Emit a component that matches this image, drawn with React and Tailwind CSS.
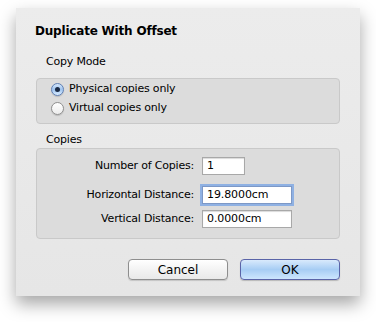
import React from "react";

const font = { fontFamily: '"DejaVu Sans", "Lucida Grande", sans-serif' };

const Radio = ({ checked, label }) => (
  <label className="flex items-center gap-[5px] h-[19px] text-[11px] tracking-[-0.2px] text-black">
    <span
      className={`relative w-[13px] h-[13px] rounded-full border ${
        checked
          ? "border-[#5f7fb3] bg-gradient-to-b from-[#d4e6fa] via-[#9fc4ef] to-[#d9ecff]"
          : "border-[#8f8f8f] bg-gradient-to-b from-[#ffffff] to-[#ececec]"
      } shadow-[0_1px_1px_rgba(0,0,0,0.15)]`}
    >
      {checked && (
        <span className="absolute left-1/2 top-1/2 w-[5px] h-[5px] -ml-[2.5px] -mt-[2.5px] rounded-full bg-[#1a2a44]" />
      )}
    </span>
    {label}
  </label>
);

const Field = ({ label, value, width, focused, className }) => (
  <div className={`flex items-center h-[18px] ${className}`}>
    <span className="w-[165px] text-right pr-[8px] text-[11px] tracking-[-0.2px] text-black">{label}</span>
    <div
      className={`h-[18px] bg-white border flex items-center pl-[4px] text-[11px] tracking-[-0.1px] text-black ${
        focused
          ? "border-[#7d98c6] shadow-[0_0_0_2px_#8fb1e3]"
          : "border-[#a8a8a8] shadow-[inset_0_1px_1px_rgba(0,0,0,0.15)]"
      }`}
      style={{ width }}
    >
      {value}
    </div>
  </div>
);

export default function App() {
  return (
    <div className="w-[376px] h-[322px] bg-white overflow-hidden" style={font}>
      <div className="ml-[16px] mt-[8px] w-[344px] h-[288px] bg-gradient-to-b from-[#ececec] to-[#e6e6e6] shadow-[0_8px_16px_rgba(0,0,0,0.35)] flex flex-col">
        <h1 className="pl-[19px] pt-[17px] h-[46px] text-[12px] tracking-[-0.2px] font-bold text-black leading-none">
          Duplicate With Offset
        </h1>
        <div className="pl-[20px] w-[324px] flex flex-col">
          <div className="pl-[10px] h-[16px] flex items-center text-[11px] tracking-[-0.2px] text-black">Copy Mode</div>
          <div className="mt-[8px] h-[46px] rounded-[4px] border border-[#c9c9c9] bg-[#dcdcdc] pl-[14px] pt-[1px]">
            <Radio checked label="Physical copies only" />
            <Radio label="Virtual copies only" />
          </div>
          <div className="mt-[8px] pl-[10px] h-[16px] flex items-center text-[11px] tracking-[-0.2px] text-black">Copies</div>
          <div className="h-[91px] rounded-[4px] border border-[#c9c9c9] bg-[#dcdcdc] pt-[8px] flex flex-col">
            <Field label="Number of Copies:" value="1" width={43} />
            <Field label="Horizontal Distance:" value="19.8000cm" width={90} focused className="mt-[11px]" />
            <Field label="Vertical Distance:" value="0.0000cm" width={90} className="mt-[6px]" />
          </div>
        </div>
        <div className="mt-[20px] pr-[20px] flex justify-end gap-[12px]">
          <button className="w-[100px] h-[21px] rounded-[4px] border border-[#8e8e8e] bg-gradient-to-b from-[#ffffff] via-[#f3f3f3] to-[#e9e9e9] text-[12px] text-black shadow-[0_1px_1px_rgba(0,0,0,0.15)]">
            Cancel
          </button>
          <button className="w-[100px] h-[21px] rounded-[4px] border border-[#5a64a8] bg-gradient-to-b from-[#d9eafc] via-[#a7cdf4] to-[#cde6fe] text-[12px] text-black shadow-[0_1px_1px_rgba(0,0,0,0.2)]">
            OK
          </button>
        </div>
      </div>
    </div>
  );
}
